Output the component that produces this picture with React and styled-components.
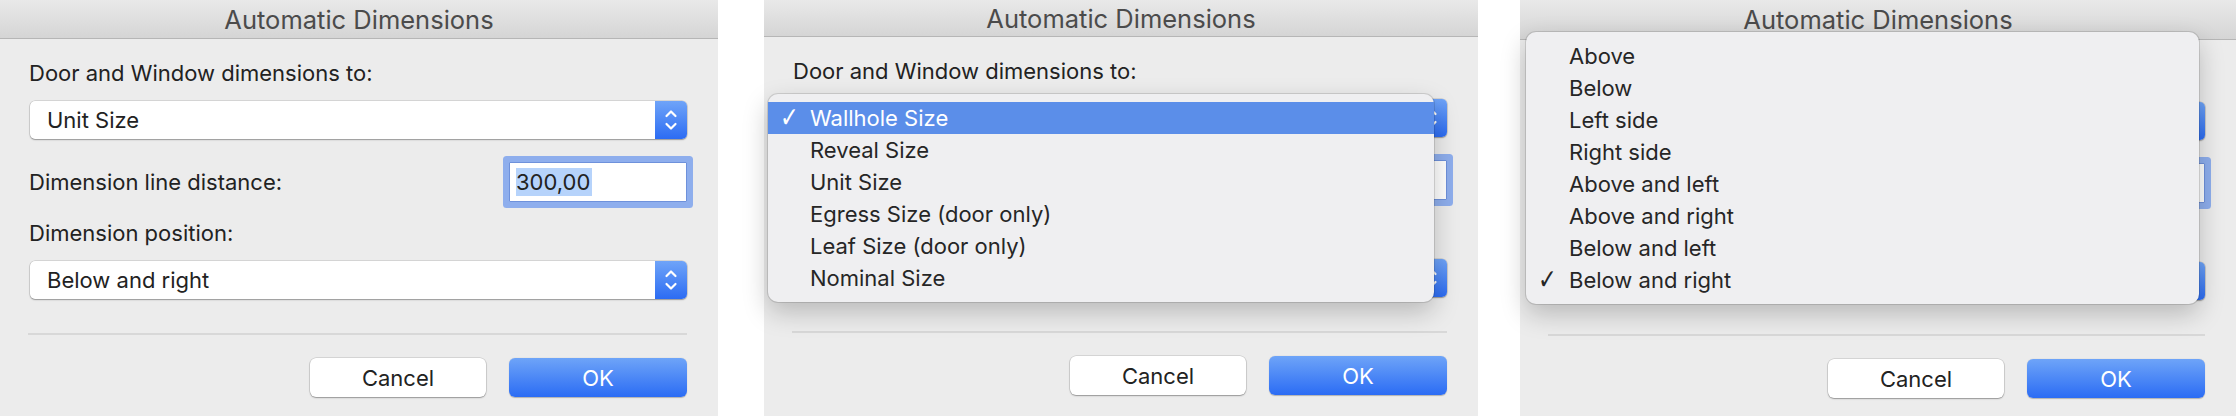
import styled, { createGlobalStyle } from "styled-components";

const GlobalStyle = createGlobalStyle`
  html, body {
    margin: 0;
    padding: 0;
    background: #ffffff;
  }
  body {
    font-family: Inter, "Liberation Sans", sans-serif;
    -webkit-font-smoothing: antialiased;
  }
`;

const Page = styled.div`
  display: flex;
  width: 2236px;
  height: 416px;
  overflow: hidden;
  background: #ffffff;
`;

const Window = styled.div`
  position: relative;
  flex: none;
  width: ${(p) => p.$width}px;
  margin-left: ${(p) => p.$offset || 0}px;
  height: 416px;
  background: #ececec;
  display: flex;
  flex-direction: column;
`;

const TitleBar = styled.div`
  flex: none;
  height: ${(p) => p.$height}px;
  background: linear-gradient(#e9e9e9, #d5d5d5);
  border-bottom: 1px solid #b6b6b6;
  display: flex;
  align-items: center;
  justify-content: center;
  font-size: 25.5px;
  color: #4b4b4b;
`;

const Content = styled.div`
  display: flex;
  flex-direction: column;
  padding: 0 31px 0 29px;
  color: #222;
  font-size: 22px;
`;

// text under an open menu is not drawn
const Text = styled.span`
  visibility: ${(p) => (p.$covered ? "hidden" : "visible")};
`;

const Label = styled.div`
  line-height: 26px;
  margin-top: ${(p) => p.$top}px;
`;

const Popup = styled.div`
  display: flex;
  align-items: center;
  height: 38px;
  margin: 15px 0 0 1px;
  background: #fff;
  border-radius: 5px;
  box-shadow: 0 0 0 0.5px rgba(0, 0, 0, 0.18), 0 1px 1.5px rgba(0, 0, 0, 0.3);
  overflow: hidden;
`;

const PopupText = styled(Text)`
  flex: 1;
  padding-left: 17px;
`;

const Stepper = styled.div`
  width: 32px;
  height: 100%;
  display: flex;
  align-items: center;
  justify-content: center;
  background: linear-gradient(#6fa4f8, #2c6cf3);
`;

const FieldRow = styled.div`
  display: flex;
  align-items: center;
  justify-content: space-between;
  margin-top: 23px;
  height: 40px;
`;

const Field = styled.div`
  box-sizing: border-box;
  width: 178px;
  height: 40px;
  background: #fff;
  border: 1px solid #6e91db;
  border-radius: 1px;
  box-shadow: 0 0 0 6px #8eaeed;
  display: flex;
  align-items: center;
  padding-left: 6px;
`;

const Selected = styled(Text)`
  background: #b6d3fb;
  line-height: 28px;
  padding-right: 2px;
`;

const Separator = styled.div`
  height: 2px;
  background: #d8d8d8;
  margin: 34px 0 0 -1px;
`;

const Buttons = styled.div`
  display: flex;
  justify-content: flex-end;
  gap: 23px;
  margin-top: 23px;
`;

const Button = styled.div`
  width: ${(p) => p.$width}px;
  height: 39px;
  border-radius: 6px;
  display: flex;
  align-items: center;
  justify-content: center;
  background: ${(p) => (p.$primary ? "linear-gradient(#6ea4f8, #2b6cf4)" : "#fff")};
  color: ${(p) => (p.$primary ? "#fff" : "#222")};
  box-shadow: ${(p) =>
    p.$primary
      ? "0 0.5px 1px rgba(0,0,0,0.25)"
      : "0 0 0 0.5px rgba(0,0,0,0.18), 0 1px 1.5px rgba(0,0,0,0.3)"};
`;

const Menu = styled.div`
  position: absolute;
  top: ${(p) => p.$top}px;
  left: ${(p) => p.$left}px;
  width: ${(p) => p.$width}px;
  padding: 8px 0;
  background: #efeff1;
  border-radius: 10px;
  box-shadow: 0 0 0 1px rgba(0, 0, 0, 0.12), 0 10px 26px rgba(0, 0, 0, 0.22);
  font-size: 22px;
  color: #262626;
`;

const MenuItem = styled.div`
  position: relative;
  height: 32px;
  line-height: 32px;
  padding-left: ${(p) => p.$indent}px;
  background: ${(p) => (p.$active ? "#5b8ee9" : "transparent")};
  color: ${(p) => (p.$active ? "#fff" : "inherit")};
`;

const Check = styled.span`
  position: absolute;
  left: ${(p) => p.$left}px;
  top: 0;
  font-family: "DejaVu Sans", sans-serif;
  font-size: 28px;
  line-height: 32px;
  transform: scaleX(0.8);
  transform-origin: left center;
`;

const Chevrons = () => (
  <svg width="14" height="24" viewBox="0 0 14 24">
    <polyline points="2.5,8 7,3.5 11.5,8" fill="none" stroke="#fff" strokeWidth="2.2" strokeLinecap="round" strokeLinejoin="round" />
    <polyline points="2.5,16 7,20.5 11.5,16" fill="none" stroke="#fff" strokeWidth="2.2" strokeLinecap="round" strokeLinejoin="round" />
  </svg>
);

// covered: 0 = nothing, 1 = from first popup down, 2 = from first label down
const Dialog = ({ titleHeight, covered = 0 }) => (
  <>
    <TitleBar $height={titleHeight}>Automatic Dimensions</TitleBar>
    <Content>
      <Label $top={21}>
        <Text $covered={covered >= 2}>Door and Window dimensions to:</Text>
      </Label>
      <Popup>
        <PopupText $covered={covered >= 1}>Unit Size</PopupText>
        <Stepper><Chevrons /></Stepper>
      </Popup>
      <FieldRow>
        <Text $covered={covered >= 1}>Dimension line distance:</Text>
        <Field><Selected $covered={covered >= 1}>300,00</Selected></Field>
      </FieldRow>
      <Label $top={18}>
        <Text $covered={covered >= 1}>Dimension position:</Text>
      </Label>
      <Popup>
        <PopupText $covered={covered >= 1}>Below and right</PopupText>
        <Stepper><Chevrons /></Stepper>
      </Popup>
      <Separator />
      <Buttons>
        <Button $width={176}>Cancel</Button>
        <Button $width={178} $primary>OK</Button>
      </Buttons>
    </Content>
  </>
);

const sizeOptions = [
  "Wallhole Size",
  "Reveal Size",
  "Unit Size",
  "Egress Size (door only)",
  "Leaf Size (door only)",
  "Nominal Size",
];

const positionOptions = [
  "Above",
  "Below",
  "Left side",
  "Right side",
  "Above and left",
  "Above and right",
  "Below and left",
  "Below and right",
];

const App = () => (
  <Page>
    <GlobalStyle />
    <Window $width={718}>
      <Dialog titleHeight={38} />
    </Window>

    <Window $width={714} $offset={46}>
      <Dialog titleHeight={36} covered={1} />
      <Menu $top={94} $left={4} $width={666}>
        {sizeOptions.map((o, i) => (
          <MenuItem key={o} $indent={42} $active={i === 0}>
            {i === 0 && <Check $left={12}>✓</Check>}
            {o}
          </MenuItem>
        ))}
      </Menu>
    </Window>

    <Window $width={716} $offset={42}>
      <Dialog titleHeight={39} covered={2} />
      <Menu $top={32} $left={6} $width={673}>
        {positionOptions.map((o, i) => (
          <MenuItem key={o} $indent={43}>
            {i === positionOptions.length - 1 && <Check $left={12}>✓</Check>}
            {o}
          </MenuItem>
        ))}
      </Menu>
    </Window>
  </Page>
);

export default App;
